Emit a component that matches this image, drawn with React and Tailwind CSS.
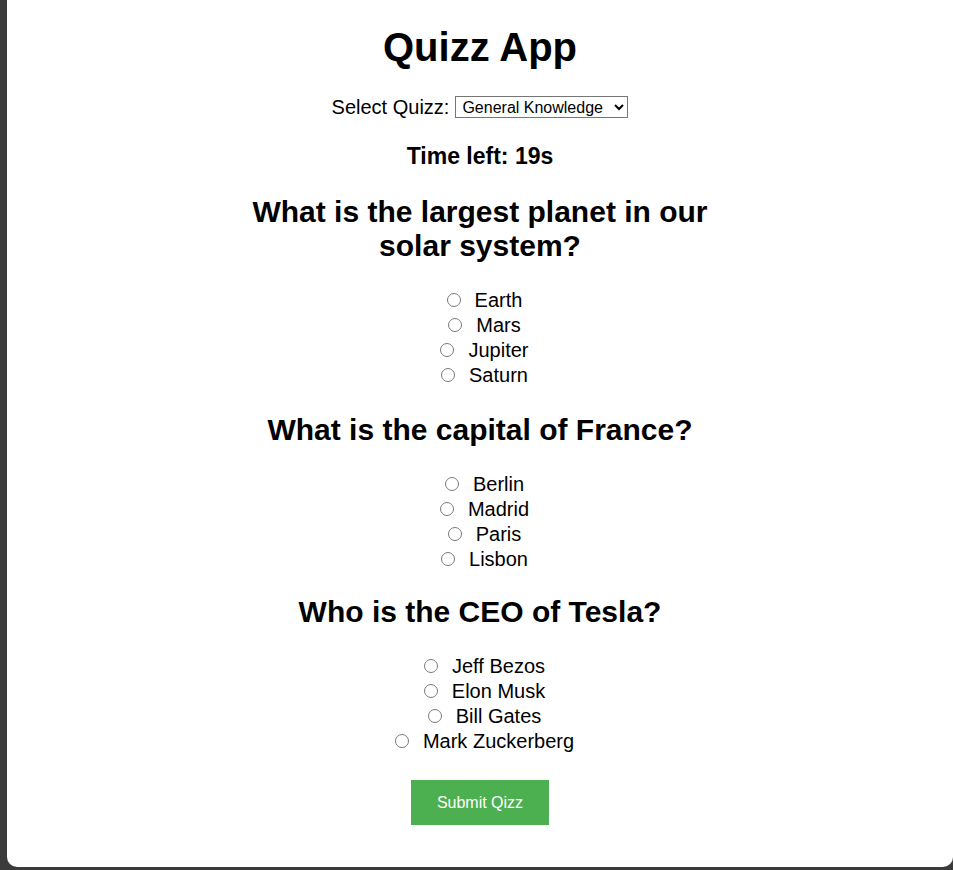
import { useState } from 'react'

const questions = [
  {
    question: 'What is the largest planet in our solar system?',
    options: ['Earth', 'Mars', 'Jupiter', 'Saturn'],
  },
  {
    question: 'What is the capital of France?',
    options: ['Berlin', 'Madrid', 'Paris', 'Lisbon'],
  },
  {
    question: 'Who is the CEO of Tesla?',
    options: ['Jeff Bezos', 'Elon Musk', 'Bill Gates', 'Mark Zuckerberg'],
  },
]

function App() {
  const [answers, setAnswers] = useState({})

  return (
    <div className="h-[870px] overflow-hidden bg-[#3b3b3b] pl-[7px] font-['Liberation_Sans',Arial,sans-serif] text-black">
      <div className="-mt-[10px] flex h-[877px] flex-col items-center rounded-[10px] bg-white pt-[34px]">
        <h1 className="text-[40px] font-bold leading-[46px]">Quizz App</h1>

        {/* Quiz selector */}
        <div className="mt-[26px] flex h-[22px] items-center text-[20px]">
          <label htmlFor="quiz">Select Quizz:</label>
          <select
            id="quiz"
            className="ml-[6px] h-[22px] w-[173px] border border-[#767676] bg-white px-[2px] text-[16px] leading-[18px]"
            defaultValue="gk"
          >
            <option value="gk">General Knowledge</option>
          </select>
        </div>

        <p className="mt-[24px] text-[23px] font-bold leading-[28px]">Time left: 19s</p>

        {/* Questions */}
        {questions.map((q, qi) => (
          <div key={qi} className={`flex w-[480px] flex-col items-center ${qi === 2 ? '-mt-[2px]' : ''}`}>
            <h2 className="mt-[25px] text-center text-[30px] font-bold leading-[34px]">{q.question}</h2>
            <div className="mt-[25px] flex flex-col items-center">
              {q.options.map((opt) => (
                <label key={opt} className="flex h-[25px] items-center text-[20px] leading-[25px]">
                  <input
                    type="radio"
                    name={`q${qi}`}
                    checked={answers[qi] === opt}
                    onChange={() => setAnswers({ ...answers, [qi]: opt })}
                    className="ml-[9px] mr-[14px] -mt-[1px] h-[14px] w-[14px] appearance-none rounded-full border border-[#7a7a7a] bg-white checked:border-[4px] checked:border-[#0075ff]"
                  />
                  {opt}
                </label>
              ))}
            </div>
          </div>
        ))}

        <button className="mt-[26px] h-[45px] w-[138px] bg-[#4caf50] text-[16px] text-white">
          Submit Qizz
        </button>
      </div>
    </div>
  )
}

export default App
